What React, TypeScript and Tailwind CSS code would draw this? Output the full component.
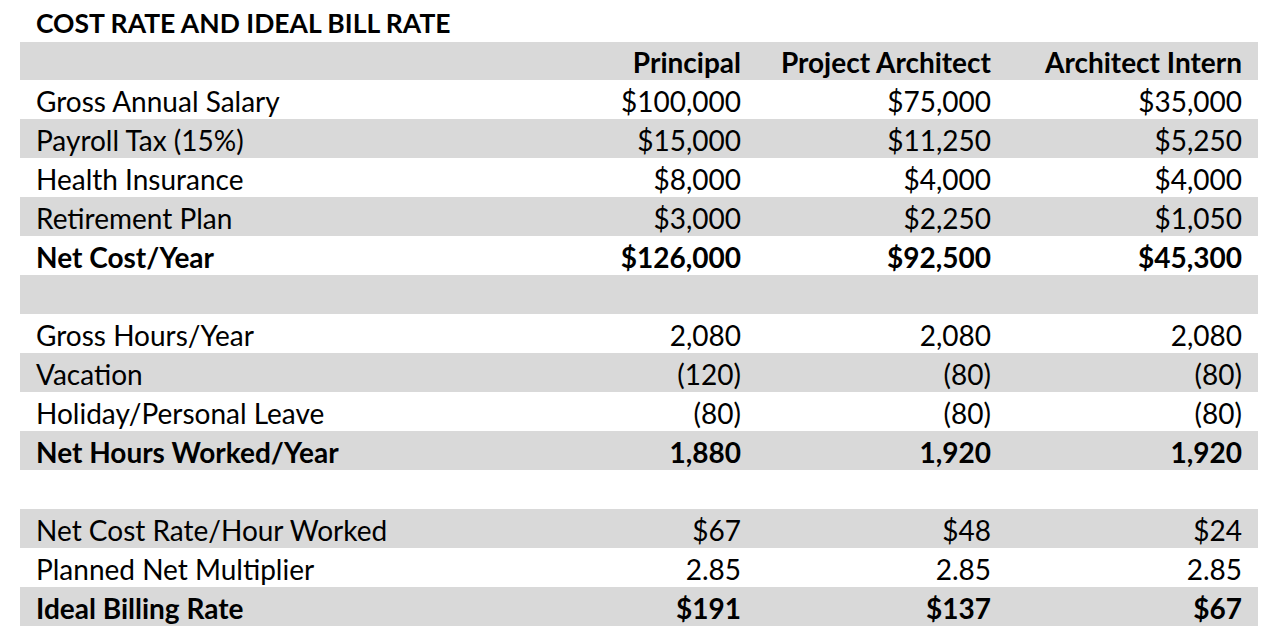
type Row = {
  label: string
  values: string[]
  bold?: boolean
  shaded?: boolean
}

const rows: Row[] = [
  { label: "Gross Annual Salary", values: ["$100,000", "$75,000", "$35,000"] },
  { label: "Payroll Tax (15%)", values: ["$15,000", "$11,250", "$5,250"], shaded: true },
  { label: "Health Insurance", values: ["$8,000", "$4,000", "$4,000"] },
  { label: "Retirement Plan", values: ["$3,000", "$2,250", "$1,050"], shaded: true },
  { label: "Net Cost/Year", values: ["$126,000", "$92,500", "$45,300"], bold: true },
  { label: "", values: ["", "", ""], shaded: true },
  { label: "Gross Hours/Year", values: ["2,080", "2,080", "2,080"] },
  { label: "Vacation", values: ["(120)", "(80)", "(80)"], shaded: true },
  { label: "Holiday/Personal Leave", values: ["(80)", "(80)", "(80)"] },
  { label: "Net Hours Worked/Year", values: ["1,880", "1,920", "1,920"], bold: true, shaded: true },
  { label: "", values: ["", "", ""] },
  { label: "Net Cost Rate/Hour Worked", values: ["$67", "$48", "$24"], shaded: true },
  { label: "Planned Net Multiplier", values: ["2.85", "2.85", "2.85"] },
  { label: "Ideal Billing Rate", values: ["$191", "$137", "$67"], bold: true, shaded: true },
]

const headers = ["Principal", "Project Architect", "Architect Intern"]

function TableRow({ row }: { row: Row }) {
  return (
    <div
      className={`grid grid-cols-[487px_250px_250px_251px] h-[39px] items-center ${
        row.shaded ? "bg-[#d9d9d9]" : "bg-white"
      } ${row.bold ? "font-bold" : "font-normal"}`}
    >
      <div className="pl-4 pt-[2px] whitespace-nowrap">{row.label}</div>
      {row.values.map((v, i) => (
        <div key={i} className="pr-4 pt-[2px] text-right whitespace-nowrap">
          {v}
        </div>
      ))}
    </div>
  )
}

export default function App() {
  return (
    <div
      className="w-[1280px] h-[644px] bg-white text-black text-[28px] leading-none"
      style={{ fontFamily: "Lato, 'Open Sans', sans-serif" }}
    >
      {/* Title */}
      <div className="h-[42px] pl-9 pt-[10px] text-[26.5px] font-bold whitespace-nowrap">
        COST RATE AND IDEAL BILL RATE
      </div>

      <div className="ml-5 w-[1238px]">
        {/* Column headers */}
        <div className="grid grid-cols-[487px_250px_250px_251px] h-[38px] items-center bg-[#d9d9d9] font-bold">
          <div />
          {headers.map((h) => (
            <div key={h} className="pr-4 pt-[2px] text-right whitespace-nowrap">
              {h}
            </div>
          ))}
        </div>

        {rows.map((row, i) => (
          <TableRow key={i} row={row} />
        ))}
      </div>
    </div>
  )
}
